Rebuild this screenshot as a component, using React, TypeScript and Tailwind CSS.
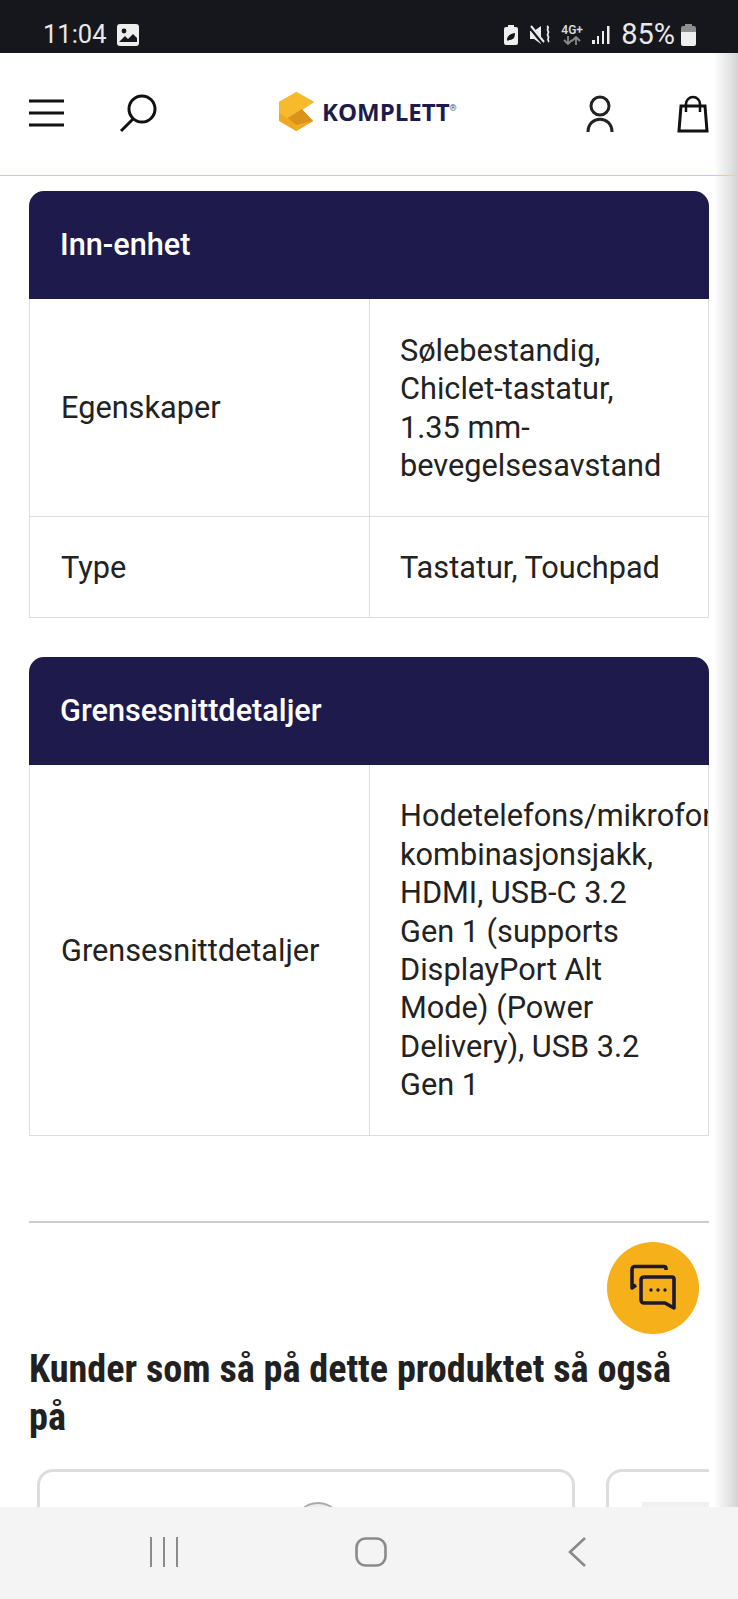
// Status bar icons
function StatusRight() {
    return (
        <div className="flex items-center text-[#e8e8e8]">
            <svg width="16" height="22" viewBox="0 0 16 22" className="mr-[11px]">
                <path d="M5 1h6v2h2a2 2 0 0 1 2 2v14a2 2 0 0 1-2 2H3a2 2 0 0 1-2-2V5a2 2 0 0 1 2-2h2z" fill="#eeeeee" />
                <path d="M4 16c0-4 3-6 8-7 0 5-2 7-6 7l-1 1z" fill="#15171c" />
            </svg>
            <svg width="22" height="22" viewBox="0 0 22 22" className="mr-[9px]">
                <path d="M0 7h4l7-5v18l-7-5H0z" fill="#eeeeee" />
                <path d="M1 4l13 16" stroke="#15171c" strokeWidth="4" />
                <path d="M1 2l13 16" stroke="#eeeeee" strokeWidth="2" />
                <path d="M17 2c3 2-1 3 1 5s-2 3 0 5-2 3 1 6" stroke="#eeeeee" strokeWidth="1.8" fill="none" />
            </svg>
            <div className="flex flex-col items-center mr-[9px] w-[22px] leading-none">
                <span className="text-[12px] font-semibold text-[#d8d8d8] leading-[12px] whitespace-nowrap">4G+</span>
                <svg width="20" height="9" viewBox="0 0 20 9">
                    <path d="M6 0v8M2 4l4 4 4-4" stroke="#8a8a8a" strokeWidth="1.8" fill="none" />
                    <path d="M14 9V1M10 5l4-4 4 4" stroke="#8a8a8a" strokeWidth="1.8" fill="none" />
                </svg>
            </div>
            <svg width="18" height="20" viewBox="0 0 18 20" className="mr-[11px]">
                <rect x="0" y="15" width="3" height="4" fill="#eeeeee" />
                <rect x="5" y="11" width="2" height="8" fill="#eeeeee" />
                <rect x="10" y="6" width="2" height="13" fill="#eeeeee" />
                <rect x="15" y="1" width="2.5" height="18" fill="#eeeeee" />
            </svg>
            <span className="text-[29px] leading-none mr-[6px]">85%</span>
            <svg width="15" height="22" viewBox="0 0 15 22">
                <path d="M4 0h7v2h2a2 2 0 0 1 2 2v4H0V4a2 2 0 0 1 2-2h2z" fill="#8f8f8f" />
                <path d="M0 8h15v12a2 2 0 0 1-2 2H2a2 2 0 0 1-2-2z" fill="#eeeeee" />
            </svg>
        </div>
    );
}

function Logo() {
    return (
        <div className="flex items-center w-[180px]">
            <svg width="36" height="40" viewBox="0 0 36 40">
                <path d="M17.5 0L35 10 23 18 34 29 17 39 0 29V10z" fill="#f0a820" />
                <path d="M17.5 0L35 10 9 26 0 21V10z" fill="#f7ba2c" />
                <path d="M9 26L23 17 34 29 17 39z" fill="#d9921a" />
                <path d="M9 26L17 39 34 29 17 33z" fill="#f2ad24" />
            </svg>
            <span className="ml-[7px] text-[24px] font-bold text-[#1e1a4b] leading-none font-['Open_Sans',sans-serif] whitespace-nowrap">KOMPLETT</span>
            <span className="text-[9px] text-[#555555] leading-none self-start mt-[12px]">®</span>
        </div>
    );
}

function SpecTable({ title, rows }: { title: string; rows: { label: string; value: string[]; cls: string }[] }) {
    return (
        <div>
            <div className="h-[108px] bg-[#1e1a4b] rounded-t-[15px] flex items-center pl-[31px]">
                <h3 className="text-white text-[30.7px] font-medium leading-none">{title}</h3>
            </div>
            <div className="border-l border-[#dddddd]">
                {rows.map((row) => (
                    <div key={row.label} className={`flex border-b border-[#dddddd] ${row.cls}`}>
                        <div className="w-[340px] flex items-center pl-[31px] pt-[2px] border-r border-[#dddddd] text-[30.7px] text-[#222222]">{row.label}</div>
                        <div className="w-[339px] overflow-hidden flex flex-col justify-center pl-[30px] pt-[2px] border-r border-[#dddddd] text-[30.7px] leading-[38.4px] text-[#222222] whitespace-nowrap">
                            {row.value.map((line) => <div key={line}>{line}</div>)}
                        </div>
                    </div>
                ))}
            </div>
        </div>
    );
}

export default function App() {
    return (
        <div className="relative w-[738px] h-[1599px] overflow-hidden bg-white font-['Roboto',sans-serif]">
            {/* status bar */}
            <div className="h-[53px] bg-[#15171c] flex items-center justify-between pl-[43px] pr-[42px] pt-[16px]">
                <div className="flex items-center text-[#e8e8e8]">
                    <span className="text-[25.5px] leading-none">11:04</span>
                    <svg width="22" height="22" viewBox="0 0 22 22" className="ml-[10px]">
                        <rect width="22" height="22" rx="3" fill="#eeeeee" />
                        <circle cx="7" cy="7" r="2.4" fill="#15171c" />
                        <path d="M2 18l6-6 3 3 5-5 4 4v4z" fill="#15171c" />
                    </svg>
                </div>
                <StatusRight />
            </div>

            {/* header */}
            <header className="h-[123px] border-b border-[#eecb6c] flex items-center pl-[29px] pb-[2px]">
                <svg width="35" height="28" viewBox="0 0 35 28">
                    <path d="M0 2h35M0 14h35M0 26h35" stroke="#111111" strokeWidth="3" />
                </svg>
                <svg width="40" height="40" viewBox="0 0 40 40" className="ml-[55px] mt-[2px]">
                    <circle cx="23" cy="15" r="13" fill="none" stroke="#111111" strokeWidth="3" />
                    <path d="M14 25L2 37" stroke="#111111" strokeWidth="3" />
                </svg>
                <div className="ml-[120px] -mt-[2px]"><Logo /></div>
                <svg width="28" height="38" viewBox="0 0 28 38" className="ml-[127px] mt-[2px]">
                    <circle cx="14" cy="11" r="9" fill="none" stroke="#222222" strokeWidth="3" />
                    <path d="M2 37c0-17 24-17 24 0" fill="none" stroke="#222222" strokeWidth="3" />
                </svg>
                <svg width="32" height="38" viewBox="0 0 32 38" className="ml-[63px] mt-[2px]">
                    <path d="M4 11H28L30 36H2z" fill="none" stroke="#111111" strokeWidth="3" />
                    <path d="M9 17V9a7 7 0 0 1 14 0v8" fill="none" stroke="#111111" strokeWidth="2.5" />
                </svg>
            </header>

            <main className="px-[29px] pt-[15px]">
                <SpecTable
                    title="Inn-enhet"
                    rows={[
                        { label: 'Egenskaper', value: ['Sølebestandig,', 'Chiclet-tastatur,', '1.35 mm-', 'bevegelsesavstand'], cls: 'h-[218px]' },
                        { label: 'Type', value: ['Tastatur, Touchpad'], cls: 'h-[101px]' },
                    ]}
                />
                <div className="mt-[39px]">
                    <SpecTable
                        title="Grensesnittdetaljer"
                        rows={[
                            { label: 'Grensesnittdetaljer', value: ['Hodetelefons/mikrofon-', 'kombinasjonsjakk,', 'HDMI, USB-C 3.2', 'Gen 1 (supports', 'DisplayPort Alt', 'Mode) (Power', 'Delivery), USB 3.2', 'Gen 1'], cls: 'h-[371px]' },
                        ]}
                    />
                </div>
                <hr className="mt-[85px] border-t-2 border-[#cccccc]" />
                <h2 className="mt-[122px] text-[38.2px] leading-[48px] font-bold text-[#212121] font-['Roboto_Condensed','Roboto',sans-serif]">Kunder som så på dette produktet så også på</h2>

                {/* product cards, cut off by the nav bar */}
                <div className="mt-[28px] flex gap-[31px] pl-[8px] overflow-hidden">
                    <div className="w-[538px] h-[200px] shrink-0 border-[3px] border-[#dddddd] rounded-[16px] flex justify-center pt-[30px]">
                        <div className="ml-[24px] w-[48px] h-[48px] rounded-full border-t-2 border-[#aaaaaa] bg-[#eeeeee]"></div>
                    </div>
                    <div className="w-[538px] h-[200px] shrink-0 border-[3px] border-[#dddddd] rounded-[16px] pl-[33px] pt-[30px]">
                        <div className="w-[70px] h-[60px] bg-[#f0f0f0]"></div>
                    </div>
                </div>
            </main>

            {/* edge shadow on the right */}
            <div className="absolute right-0 top-[53px] bottom-[92px] w-[24px] bg-gradient-to-r from-transparent to-[#d4d4d4]"></div>

            {/* chat button */}
            <button className="absolute left-[607px] top-[1242px] w-[92px] h-[92px] rounded-full bg-[#f5b01a] flex items-center justify-center">
                <svg width="48" height="48" viewBox="0 0 48 48" fill="none" stroke="#1e1a2e" strokeWidth="3.6" strokeLinejoin="round">
                    <path d="M37 6V4.5a2 2 0 0 0-2-2H6a3 3 0 0 0-3 3V24l4-3" />
                    <path d="M15 13H43a2 2 0 0 1 2 2V44l-9-5H15a3 3 0 0 1-3-3V16a3 3 0 0 1 3-3z" />
                    <circle cx="22" cy="26" r="1.7" fill="#1e1a2e" stroke="none" />
                    <circle cx="29" cy="26" r="1.7" fill="#1e1a2e" stroke="none" />
                    <circle cx="36" cy="26" r="1.7" fill="#1e1a2e" stroke="none" />
                </svg>
            </button>

            {/* android nav bar */}
            <nav className="absolute left-0 right-0 bottom-0 h-[92px] bg-[#f4f4f4] flex items-start pt-[30px] pl-[149px]">
                <svg width="30" height="30" viewBox="0 0 30 30">
                    <path d="M2 0v30M15 0v30M28 0v30" stroke="#8a8a8a" strokeWidth="2" />
                </svg>
                <svg width="32" height="30" viewBox="0 0 32 30" className="ml-[176px]">
                    <rect x="1.5" y="1.5" width="29" height="27" rx="9" fill="none" stroke="#8a8a8a" strokeWidth="2.6" />
                </svg>
                <svg width="19" height="30" viewBox="0 0 19 30" className="ml-[181px]">
                    <path d="M17 1L2 15l15 14" fill="none" stroke="#8a8a8a" strokeWidth="2.6" />
                </svg>
            </nav>
        </div>
    );
}
